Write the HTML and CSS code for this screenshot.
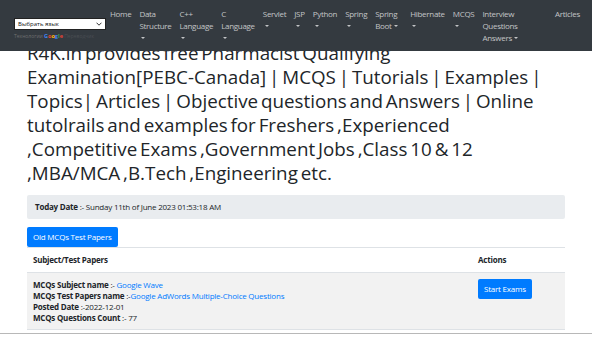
FILE: index.html
```html
<!DOCTYPE html>
<html lang="en">
<head>
  <meta charset="UTF-8">
  <meta name="viewport" content="width=device-width, initial-scale=1.0">
  <title>R4K.in MCQs Test Papers</title>
  <link rel="stylesheet" href="styles.css">
</head>
<body>
  <nav class="navbar">
    <div class="translate">
      <div class="lang-select">
        <span>Выбрать язык</span>
        <svg width="6" height="4" viewBox="0 0 6 4"><path d="M0.5 0.7 L3 3.2 L5.5 0.7" fill="none" stroke="#333" stroke-width="1"/></svg>
      </div>
      <div class="powered">Технологии <span class="g-logo"><span class="g-blue">G</span><span class="g-red">o</span><span class="g-yellow">o</span><span class="g-blue">g</span><span class="g-green">l</span><span class="g-red">e</span></span> <span class="gt">Переводчик</span></div>
    </div>
    <ul class="nav-list">
      <li><a href="#">Home</a></li>
      <li><a href="#" class="dropdown">Data Structure</a></li>
      <li><a href="#" class="dropdown">C++ Language</a></li>
      <li><a href="#" class="dropdown">C Language</a></li>
      <li><a href="#" class="dropdown">Servlet</a></li>
      <li><a href="#" class="dropdown">JSP</a></li>
      <li><a href="#" class="dropdown">Python</a></li>
      <li><a href="#" class="dropdown">Spring</a></li>
      <li class="fit"><a href="#" class="dropdown">Spring Boot</a></li>
      <li><a href="#" class="dropdown">Hibernate</a></li>
      <li><a href="#" class="dropdown">MCQS</a></li>
      <li class="wide"><a href="#" class="dropdown">Interview Questions Answers</a></li>
      <li><a href="#">Articles</a></li>
    </ul>
  </nav>

  <div class="container">
    <h1 class="title">R4K.in provides free Pharmacist Qualifying<br>
      Examination[PEBC-Canada] | MCQS | Tutorials | Examples |<br>
      Topics| Articles | Objective questions and Answers | Online<br>
      tutolrails and examples for Freshers ,Experienced<br>
      ,Competitive Exams ,Government Jobs ,Class 10 &amp; 12<br>
      ,MBA/MCA ,B.Tech ,Engineering etc.</h1>

    <div class="date-box"><b>Today Date</b> :- Sunday 11th of June 2023 01:53:18 AM</div>

    <a href="#" class="btn">Old MCQs Test Papers</a>

    <table class="papers">
      <thead>
        <tr>
          <th>Subject/Test Papers</th>
          <th class="actions">Actions</th>
        </tr>
      </thead>
      <tbody>
        <tr class="striped">
          <td>
            <b>MCQs Subject name</b> :- <a href="#">Google Wave</a><br>
            <b>MCQs Test Papers name</b> :-<a href="#">Google AdWords Multiple-Choice Questions</a><br>
            <b>Posted Date</b> :-2022-12-01<br>
            <b>MCQs Questions Count</b> :- 77
          </td>
          <td class="actions"><a href="#" class="btn">Start Exams</a></td>
        </tr>
        <tr>
          <td>
            <b>MCQs Subject name</b> :- <a href="#">Google Wave</a><br>
            <b>MCQs Test Papers name</b> :-<a href="#">Google Wave Multiple-Choice Questions</a><br>
            <b>Posted Date</b> :-2022-12-01<br>
            <b>MCQs Questions Count</b> :- 50
          </td>
          <td class="actions"><a href="#" class="btn">Start Exams</a></td>
        </tr>
      </tbody>
    </table>
  </div>

  <div class="bottom-bar"></div>
</body>
</html>
```

FILE: styles.css
```css
body {
  margin: 0;
  font-family: "Open Sans", "Noto Sans", Arial, sans-serif;
  font-size: 8px;
  line-height: 1.5;
  letter-spacing: -0.22px;
  color: #212529;
  background: #fff;
}
a {
  color: #007bff;
  text-decoration: none;
}
.navbar {
  position: fixed;
  top: 0;
  left: 0;
  right: 0;
  z-index: 10;
  display: flex;
  align-items: flex-start;
  height: 51px;
  padding: 4px 8px 0 14px;
  background-color: #343a40;
  box-sizing: border-box;
}
.translate {
  width: 92px;
  margin-top: 14px;
  flex-shrink: 0;
  letter-spacing: 0;
}
.lang-select {
  display: flex;
  align-items: center;
  justify-content: space-between;
  height: 10px;
  padding: 0 3px;
  background: #fff;
  border: 1px solid #222;
  font-size: 6px;
  line-height: 10px;
  color: #111;
}
.powered {
  margin-top: 3px;
  font-size: 5px;
  line-height: 6px;
  color: #6f6f6f;
  white-space: nowrap;
}
.g-logo {
  font-weight: bold;
  font-size: 5.5px;
}
.g-blue { color: #4285f4; }
.g-red { color: #ea4335; }
.g-yellow { color: #fbbc05; }
.g-green { color: #34a853; }
.gt {
  color: #4a4e53;
}
.nav-list {
  display: flex;
  flex: 1;
  margin: 0;
  padding: 0;
  list-style: none;
}
.nav-list li {
  flex: 0 0 auto;
  width: min-content;
}
.nav-list li.fit {
  width: 35px;
}
.nav-list li.wide {
  flex-grow: 1;
}
.nav-list a {
  display: block;
  padding: 4px;
  font-size: 8px;
  line-height: 12px;
  letter-spacing: -0.3px;
  color: #c3c5c7;
}
.dropdown::after {
  content: "";
  display: inline-block;
  margin-left: 2px;
  vertical-align: 2px;
  border-top: 2.4px solid;
  border-left: 2.4px solid transparent;
  border-right: 2.4px solid transparent;
}
.container {
  width: 538px;
  margin: 0 auto;
  padding-top: 41px;
}
.title {
  margin: 0 0 10px;
  font-size: 18.8px;
  font-weight: 500;
  line-height: 24px;
  letter-spacing: 0;
  word-spacing: -2px;
  white-space: nowrap;
}
.date-box {
  padding: 6px 8px;
  margin-bottom: 8px;
  background-color: #e9ecef;
  border-radius: 2px;
  line-height: 12px;
}
.btn {
  display: inline-block;
  padding: 4px 6px;
  line-height: 12px;
  color: #fff;
  background-color: #007bff;
  border-radius: 2px;
}
.papers {
  width: 100%;
  border-collapse: collapse;
}
.papers th,
.papers td {
  padding: 6px;
  text-align: left;
  vertical-align: top;
  border-top: 1px solid #dee2e6;
  line-height: 11px;
}
.papers th {
  line-height: 12px;
}
.papers .actions {
  width: 81px;
}
.striped {
  background-color: #f2f2f2;
}
.bottom-bar {
  position: fixed;
  left: 0;
  right: 0;
  bottom: 0;
  height: 3px;
  background: #fff;
  border-top: 1px solid #b8b8b8;
}
```
